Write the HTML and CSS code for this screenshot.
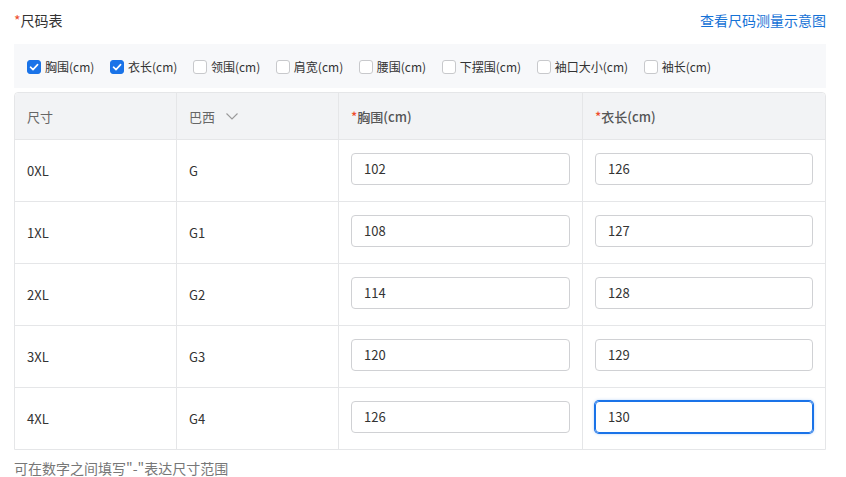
FILE: index.html
```html
<!DOCTYPE html>
<html lang="zh">
<head>
<meta charset="utf-8">
<link rel="stylesheet" href="styles.css">
</head>
<body>
<div class="wrap">
  <div class="head">
    <div class="title"><span class="req">*</span>尺码表</div>
    <a class="link">查看尺码测量示意图</a>
  </div>
  <div class="checks">
    <label class="ck"><span class="box on"><svg viewBox="0 0 14 14" width="14" height="14"><path d="M3.5 7.2 L6 9.6 L10.6 4.6" fill="none" stroke="#fff" stroke-width="1.6" stroke-linecap="round" stroke-linejoin="round"/></svg></span>胸围(cm)</label>
    <label class="ck"><span class="box on"><svg viewBox="0 0 14 14" width="14" height="14"><path d="M3.5 7.2 L6 9.6 L10.6 4.6" fill="none" stroke="#fff" stroke-width="1.6" stroke-linecap="round" stroke-linejoin="round"/></svg></span>衣长(cm)</label>
    <label class="ck"><span class="box"></span>领围(cm)</label>
    <label class="ck"><span class="box"></span>肩宽(cm)</label>
    <label class="ck"><span class="box"></span>腰围(cm)</label>
    <label class="ck"><span class="box"></span>下摆围(cm)</label>
    <label class="ck"><span class="box"></span>袖口大小(cm)</label>
    <label class="ck"><span class="box"></span>袖长(cm)</label>
  </div>
  <table class="tbl">
    <colgroup><col class="c1"><col class="c2"><col class="c3"><col class="c4"></colgroup>
    <thead>
      <tr>
        <th>尺寸</th>
        <th><span class="sel">巴西<svg width="14" height="14" viewBox="0 0 14 14"><path d="M1.5 4.5 L7 10 L12.5 4.5" fill="none" stroke="#999" stroke-width="1.1"/></svg></span></th>
        <th><span class="req">*</span>胸围(cm)</th>
        <th><span class="req">*</span>衣长(cm)</th>
      </tr>
    </thead>
    <tbody>
      <tr><td>0XL</td><td>G</td><td><div class="inp">102</div></td><td><div class="inp">126</div></td></tr>
      <tr><td>1XL</td><td>G1</td><td><div class="inp">108</div></td><td><div class="inp">127</div></td></tr>
      <tr><td>2XL</td><td>G2</td><td><div class="inp">114</div></td><td><div class="inp">128</div></td></tr>
      <tr><td>3XL</td><td>G3</td><td><div class="inp">120</div></td><td><div class="inp">129</div></td></tr>
      <tr><td>4XL</td><td>G4</td><td><div class="inp">126</div></td><td><div class="inp focus">130</div></td></tr>
    </tbody>
  </table>
  <div class="hint">可在数字之间填写"-"表达尺寸范围</div>
</div>
</body>
</html>
```
FILE: styles.css
```css
* { box-sizing: border-box; }
html, body { margin: 0; padding: 0; background: #fff; }
body { font-family: "Noto Sans CJK SC", "Noto Sans", sans-serif; color: #333; }
.wrap { width: 846px; padding: 0 20px 0 14px; }
.head { display: flex; justify-content: space-between; align-items: center; height: 38px; padding-top: 1px; }
.title { font-size: 14px; color: #333; }
.req { color: #ee4d2d; }
.link { font-size: 14px; color: #1672d6; cursor: pointer; }
.checks { margin-top: 6px; height: 44px; background: #f7f8fa; display: flex; align-items: center; padding-left: 13px; gap: 15.6px; padding-top: 1px; }
.ck { display: flex; align-items: center; font-size: 12px; color: #333; gap: 4px; line-height: 16px; }
.box { width: 14px; height: 14px; border: 1px solid #c8c9cc; border-radius: 3px; background: #fff; display: flex; }
.box.on { background: #1a73e8; border-color: #1a73e8; }
.box.on svg { margin: -1px; }
.tbl { margin-top: 4px; width: 812px; border-collapse: separate; border-spacing: 0; border: 1px solid #e5e6e8; border-radius: 4px 4px 0 0; table-layout: fixed; }
.c1 { width: 161px; }
.c2 { width: 162px; }
.c3 { width: 244px; }
.c4 { width: 243px; }
.tbl th { height: 47px; background: #f2f3f5; font-weight: normal; text-align: left; font-size: 13px; color: #666; padding: 0 12px; border-bottom: 1px solid #e5e6e8; }
.tbl th:first-child { border-top-left-radius: 4px; }
.tbl th:last-child { border-top-right-radius: 4px; }
.tbl th + th, .tbl td + td { border-left: 1px solid #e5e6e8; }
.tbl th:nth-child(3), .tbl th:nth-child(4) { color: #555; font-weight: 500; }
.sel { display: inline-flex; align-items: center; gap: 10px; }
.tbl td { height: 62px; font-size: 13px; color: #333; padding: 0 12px 1px; border-bottom: 1px solid #e5e6e8; }
.tbl td:nth-child(3), .tbl td:nth-child(4) { padding-bottom: 4px; }
.tbl tbody tr:last-child td { border-bottom: none; height: 61px; }
.inp { height: 32px; border: 1px solid #d0d1d4; border-radius: 4px; font-size: 13px; color: #333; padding: 0 12px; display: flex; align-items: center; }
.inp.focus { border-color: #1a73e8; box-shadow: 0 0 0 1px #1a73e8, 0 0 3px 1px rgba(26,115,232,0.3); }
.hint { margin-top: 8px; font-size: 14px; color: #777; }
```
